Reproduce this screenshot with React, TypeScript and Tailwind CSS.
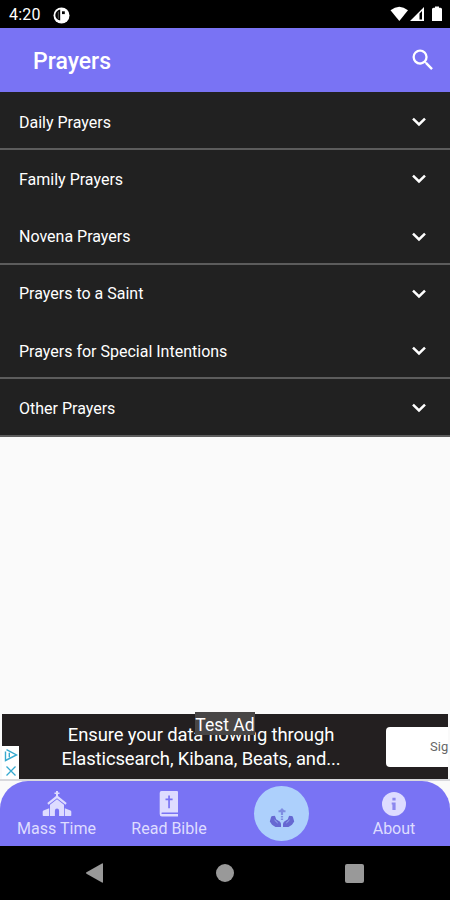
import { useState } from "react";
import { MdSearch } from "react-icons/md";

const CATEGORIES = [
  { label: "Daily Prayers", divider: true },
  { label: "Family Prayers", divider: false },
  { label: "Novena Prayers", divider: true },
  { label: "Prayers to a Saint", divider: false },
  { label: "Prayers for Special Intentions", divider: true },
  { label: "Other Prayers", divider: true },
];

function ChevronIcon() {
  return (
    <svg width="16" height="10" viewBox="0 0 16 10" fill="none" stroke="currentColor" strokeWidth="2.5">
      <path d="M2 1.700l6 5.800 6-5.800" />
    </svg>
  );
}

function ChurchIcon() {
  return (
    <svg width="30" height="26" viewBox="0 0 30 26" fill="currentColor">
      <path d="M14 0h2v1.500h1.500v1.600H16v2l8.700 7-1.200 1.700L15 7.300l-8.500 6.500-1.200-1.700 8.700-7v-2h-1.500V1.500H14z" />
      <path d="M15 8.300l7 5.400V25h-4.900v-5.300a2.100 2.100 0 0 0-4.200 0V25H8V13.700z" />
      <path d="M7.200 17.300V25H1.500q-.8 0-.8-.8v-3.400q0-.8.8-1.200zM22.800 17.300V25h5.700q.8 0 .8-.8v-3.400q0-.8-.8-1.200z" />
    </svg>
  );
}

function BibleIcon() {
  return (
    <svg width="20" height="26" viewBox="0 0 20 26" fill="currentColor">
      <path
        fillRule="evenodd"
        d="M2.500 0H18q1 0 1 1v20.500H3.300q-1 0-1 .8t1 .8H19V25.500H3Q.7 25.500.7 23V2Q.7 0 2.500 0zM9.200 4.500v3H6.500v1.700h2.700v8h1.700v-8h2.700V7.500h-2.700v-3z"
      />
    </svg>
  );
}

function InfoIcon() {
  return (
    <svg width="24" height="24" viewBox="0 0 24 24">
      <circle cx="12" cy="12" r="12" fill="currentColor" />
      <path d="M10.400 5.700h3.200v2.800h-3.200zM9.700 10.500h3.900v7.500h-3.200v-5.500h-.7z" fill="#8d88ef" />
    </svg>
  );
}

function PrayHandsIcon() {
  return (
    <svg width="26" height="20" viewBox="0 0 26 20" fill="currentColor">
      <path d="M13 0l2.200 2.300h1.300v1.900h-2.400V7h-2.200V4.200H9.500V2.300h1.300zM11.900 8h2.200v1.600h-2.200zM11.900 10.600h2.200v1.500h-2.200z" opacity=".65" />
      <path d="M2 9.200q.4-1.700 2.300-1.200 1.600-.8 2.200 1.200l.6 2 3.600 2.200q1.300 1 1.300 2.600V19H6.500L3 16.800.8 13.600z" />
      <path d="M24 9.200q-.4-1.700-2.300-1.200-1.600-.8-2.200 1.200l-.6 2-3.600 2.200q-1.300 1-1.300 2.600V19h5.500l3.500-2.200 2.200-3.200z" />
      <path d="M5.500 12l3.200 3M20.500 12l-3.200 3" stroke="#add0fc" strokeWidth=".7" />
    </svg>
  );
}

function StatusBar() {
  return (
    <div className="flex h-[28px] items-center justify-between bg-black pl-[9px] pr-[8px] text-white">
      <div className="flex items-center gap-[12px] pt-[2px]">
        <span className="text-[16px] leading-none tracking-[0.2px]">4:20</span>
        <svg width="17" height="17" viewBox="0 0 17 17">
          <circle cx="8.500" cy="8.500" r="8" fill="#fff" />
          <path d="M7.200 2.500v11Q2.300 12.300 2.300 8q.4-4.500 4.900-5.500z" fill="#000" />
          <path d="M9 4.300h2.800v2.800H9z" fill="#000" />
          <path d="M4.800 4.700h1v7h-1z" fill="#fff" opacity=".35" />
        </svg>
      </div>
      <div className="flex items-center">
        <svg width="52" height="16" viewBox="0 0 52 16" fill="currentColor">
          <path d="M.5 4.200Q9.300-2.900 18 4.200L9.300 15z" />
          <path fillRule="evenodd" d="M20 15L34 1v14zM29.500 7.500V13.500H32V5z" />
          <path d="M43.500 1.800h1.500V.5h4v1.300h1.500q1.500 0 1.500 1.500V15H42V3.300q0-1.500 1.500-1.500z" />
        </svg>
      </div>
    </div>
  );
}

function AdBanner() {
  return (
    <div className="relative mx-[2px] flex h-[65px] bg-[#231f20]">
      <div className="absolute bottom-0 left-0 flex h-[33px] w-[17px] flex-col items-center justify-around bg-white">
        <svg width="14" height="14" viewBox="0 0 14 14" fill="none" stroke="#35a9cf" strokeWidth="1.400">
          <path d="M1.500 3.500v9L12.500 7 2.500 1.700M5.300 4.800v4.400" />
        </svg>
        <svg width="12" height="12" viewBox="0 0 12 12" stroke="#35a9cf" strokeWidth="1.300">
          <path d="M1.500 1.500l9 9M10.500 1.500l-9 9" />
        </svg>
      </div>
      <p className="ml-[18px] w-[362px] pt-[9px] text-center text-[18.400px] leading-[24px] tracking-[-0.1px] text-white">
        Ensure your data flowing through
        <br />
        Elasticsearch, Kibana, Beats, and...
      </p>
      <div className="absolute top-[13px] right-0 flex h-[40px] w-[62px] items-center rounded-l-[4px] bg-white pl-[44px] text-[13px] text-[#666]">
        Sig
      </div>
      <span className="absolute -top-[2px] left-[193px] h-[23px] w-[60px] bg-[#484646] text-center text-[17.500px] leading-[27px] whitespace-nowrap text-white">
        Test Ad
      </span>
    </div>
  );
}

function BottomNav() {
  return (
    <div className="flex h-[65px] rounded-t-[28px] bg-[#7973f4] text-[16px] text-[#dedcff]">
      <button className="flex w-[113px] flex-col items-center pt-[10px]">
        <ChurchIcon />
        <span className="leading-[24px]">Mass Time</span>
      </button>
      <button className="flex w-[112px] flex-col items-center pt-[10px]">
        <BibleIcon />
        <span className="leading-[24px]">Read Bible</span>
      </button>
      <button className="flex w-[113px] justify-center pt-[5px]">
        <span className="flex h-[55px] w-[55px] items-end justify-center rounded-full bg-[#add0fc] pb-[13px] text-[#6668d2]">
          <PrayHandsIcon />
        </span>
      </button>
      <button className="flex w-[112px] flex-col items-center pt-[11px]">
        <InfoIcon />
        <span className="mt-[1px] leading-[24px]">About</span>
      </button>
    </div>
  );
}

export default function App() {
  const [selected, setSelected] = useState("");

  return (
    <div className="flex h-[900px] w-[450px] flex-col overflow-hidden bg-[#fafafa] font-['Roboto',sans-serif]">
      <StatusBar />
      <header className="flex h-[64px] items-center justify-between bg-[#7973f4] pr-[13px] pl-[33px] text-white">
        <h1 className="pt-[4px] text-[23px] font-medium">Prayers</h1>
        <MdSearch className="h-[28px] w-[28px]" />
      </header>

      <ul className="h-[344px] bg-[#212121] pt-px">
        {CATEGORIES.map((c) => (
          <li
            key={c.label}
            onClick={() => setSelected(c.label)}
            aria-selected={selected === c.label}
            className={`flex h-[57.250px] items-center justify-between border-b-2 pt-[3px] pr-[23px] pl-[19px] text-[16px] text-white ${
              c.divider ? "border-[#5c5c5c]" : "border-transparent"
            }`}
          >
            <span className="pt-px">{c.label}</span>
            <ChevronIcon />
          </li>
        ))}
      </ul>

      <div className="flex-1" />
      <AdBanner />
      <div className="h-[2px] bg-[#d8d8dc]" />
      <BottomNav />

      <div className="flex h-[54px] items-center bg-black">
        <div className="flex w-full items-center justify-between pr-[86px] pl-[86px]">
          <svg width="17" height="20" viewBox="0 0 17 20" fill="#999">
            <path d="M16 0.500q1-.5 1 .5v18q0 1-1 .5L.5 10.700q-1-.7 0-1.400z" />
          </svg>
          <span className="ml-[2px] h-[18px] w-[18px] rounded-full bg-[#999]" />
          <span className="h-[19px] w-[19px] rounded-[2px] bg-[#999]" />
        </div>
      </div>
    </div>
  );
}
